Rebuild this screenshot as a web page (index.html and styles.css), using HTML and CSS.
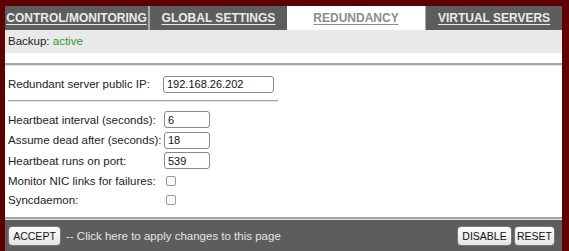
FILE: index.html
```html
<!DOCTYPE html>
<html lang="en">
<head>
<meta charset="UTF-8" />
<title>Redundancy</title>
<link rel="stylesheet" href="styles.css">
</head>
<body>
<div class="frame">
  <div class="tabs">
    <a class="tab t1" href="#">CONTROL/MONITORING</a>
    <a class="tab t2" href="#">GLOBAL SETTINGS</a>
    <a class="tab t3 active" href="#">REDUNDANCY</a>
    <a class="tab t4" href="#">VIRTUAL SERVERS</a>
  </div>

  <div class="status">Backup: <span class="ok">active</span></div>

  <hr class="rule wide">

  <form class="settings">
    <div class="row first">
      <label for="ip">Redundant server public IP:</label>
      <input type="text" id="ip" class="ip" value="192.168.26.202">
    </div>

    <hr class="rule short">

    <div class="row">
      <label for="interval">Heartbeat interval (seconds):</label>
      <input type="text" id="interval" class="num" value="6">
    </div>
    <div class="row">
      <label for="dead">Assume dead after (seconds):</label>
      <input type="text" id="dead" class="num" value="18">
    </div>
    <div class="row">
      <label for="port">Heartbeat runs on port:</label>
      <input type="text" id="port" class="num" value="539">
    </div>
    <div class="row check">
      <label for="nic">Monitor NIC links for failures:</label>
      <input type="checkbox" id="nic">
    </div>
    <div class="row check">
      <label for="sync">Syncdaemon:</label>
      <input type="checkbox" id="sync">
    </div>
  </form>

  <hr class="rule wide bottom">

  <div class="actions">
    <button type="button" class="btn-accept">ACCEPT</button>
    <span class="hint">-- Click here to apply changes to this page</span>
    <div class="right">
      <button type="button" class="btn-disable">DISABLE</button>
      <button type="button" class="btn-reset">RESET</button>
    </div>
  </div>
</div>
</body>
</html>
```

FILE: styles.css
```css
body {
  margin: 0;
  background: #5c0202;
  font-family: "Liberation Sans", Arial, sans-serif;
  font-size: 11.5px;
  color: #222;
}
.frame {
  margin: 6px 7px 0 5px;
  background: #fff;
  height: 245px;
  display: flex;
  flex-direction: column;
}
.tabs {
  display: flex;
  height: 24px;
}
.tab {
  box-sizing: border-box;
  display: flex;
  align-items: center;
  justify-content: center;
  background: #5d5d5d;
  color: #ececec;
  font-weight: bold;
  font-size: 12px;
  text-decoration: underline;
  text-underline-offset: 2px;
  border-left: 2px solid #a9a9a9;
}
.t1 { width: 143px; border-left: none; }
.t2 { width: 139px; }
.t3 { width: 138px; }
.t4 { width: 137px; }
.tab.active {
  background: #fff;
  color: #8c8c8c;
  border-left: none;
}
.tab.active + .tab {
  border-left: 1px solid #a9a9a9;
}
.status {
  background: #e9e9e9;
  height: 23px;
  line-height: 23px;
  padding-left: 3px;
}
.ok {
  color: #2e9a2e;
}
.rule {
  border: none;
  height: 2px;
  background: #a6a6a6;
  border-bottom: 1px solid #e4e4e4;
  margin: 0;
}
.rule.wide {
  margin-top: 10px;
}
.rule.short {
  width: 270px;
  height: 1px;
  margin: 5px 0 8px;
}
.rule.bottom {
  margin-top: auto;
  margin-bottom: 0;
}
.settings {
  padding: 8px 0 0 3px;
}
.row {
  display: flex;
  align-items: center;
  height: 20.5px;
}
.row label {
  width: 155px;
  flex-shrink: 0;
  white-space: nowrap;
}
input[type="text"] {
  font-family: "Liberation Sans", Arial, sans-serif;
  font-size: 11px;
  height: 17px;
  box-sizing: border-box;
  border: 1px solid #8a8a8a;
  border-radius: 3px;
  padding: 0 3px;
  color: #111;
  margin: 0;
}
.ip {
  width: 111px;
}
.num {
  width: 46px;
  margin-left: 1px !important;
}
input[type="checkbox"] {
  appearance: none;
  width: 10px;
  height: 10px;
  margin: 0 0 0 3px;
  border: 1px solid #999;
  border-radius: 2px;
  background: #fafafa;
}
.row.check {
  height: 19.5px;
}
.actions {
  background: #5d5d5d;
  height: 31px;
  display: flex;
  align-items: center;
  padding: 0 7px 0 3px;
}
.hint {
  color: #e4e4e4;
  margin-left: 5px;
}
.right {
  margin-left: auto;
  display: flex;
  gap: 2px;
}
button {
  box-sizing: border-box;
  font-family: "Liberation Sans", Arial, sans-serif;
  font-size: 10.5px;
  color: #111;
  height: 20px;
  padding: 0;
  border: 1px solid #777;
  border-radius: 4px;
  background: linear-gradient(#fefefe, #e4e4e4);
}
.btn-accept { width: 53px; }
.btn-disable { width: 55px; }
.btn-reset { width: 41px; }
```
